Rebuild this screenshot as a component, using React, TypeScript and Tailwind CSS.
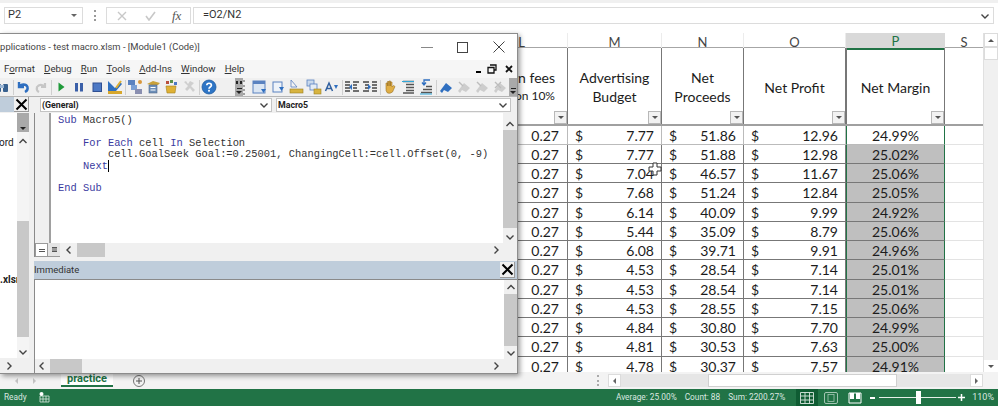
const rows = [
  ["7.77", "51.86", "12.96", "24.99%"],
  ["7.77", "51.88", "12.98", "25.02%"],
  ["7.04", "46.57", "11.67", "25.06%"],
  ["7.68", "51.24", "12.84", "25.05%"],
  ["6.14", "40.09", "9.99", "24.92%"],
  ["5.44", "35.09", "8.79", "25.06%"],
  ["6.08", "39.71", "9.91", "24.96%"],
  ["4.53", "28.54", "7.14", "25.01%"],
  ["4.53", "28.54", "7.14", "25.01%"],
  ["4.53", "28.55", "7.15", "25.06%"],
  ["4.84", "30.80", "7.70", "24.99%"],
  ["4.81", "30.53", "7.63", "25.00%"],
  ["4.78", "30.37", "7.57", "24.91%"],
];

function Chevron({ dir, className = "" }: { dir: "up" | "down" | "left" | "right"; className?: string }) {
  const d = {
    up: "M1.5 6 L5 2.5 L8.5 6",
    down: "M1.5 3.5 L5 7 L8.5 3.5",
    left: "M6.5 1.5 L3 5 L6.5 8.5",
    right: "M3.5 1.5 L7 5 L3.5 8.5",
  }[dir];
  return (
    <svg width="10" height="10" viewBox="0 0 10 10" className={className}>
      <path d={d} fill="none" stroke="#444" strokeWidth="1.4" />
    </svg>
  );
}

function FilterButton() {
  return (
    <div className="absolute bottom-0 right-0 flex h-[13px] w-[13px] items-center justify-center border border-[#b8b8b8] bg-[#f2f2f2]">
      <div className="h-0 w-0 border-x-[3px] border-t-[3px] border-x-transparent border-t-[#555]" />
    </div>
  );
}

function Slot({ children }: { children: React.ReactNode }) {
  return (
    <div className="flex w-[18px] shrink-0 items-center justify-center">
      <svg width="16" height="16" viewBox="0 0 16 16">
        {children}
      </svg>
    </div>
  );
}

function Sep() {
  return (
    <div className="flex w-[2px] shrink-0 justify-center">
      <div className="h-[15px] w-px bg-[#cfcfcf]" />
    </div>
  );
}

function Grip({ marks }: { marks?: boolean }) {
  return (
    <div className="flex h-[18px] w-[8px] shrink-0 flex-col items-center justify-end bg-[#a9a9a9] pb-[2px]">
      {marks && <div className="mb-[4px] h-[3px] w-[6px] border-x-2 border-[#222]" />}
      <div className="mb-[2px] h-px w-[5px] bg-[#222]" />
      <div className="h-0 w-0 border-x-[3px] border-t-[3px] border-x-transparent border-t-[#222]" />
    </div>
  );
}

function Toolbar() {
  return (
    <div className="flex h-[18px] items-center overflow-hidden bg-[#f0f0f0] pl-0">
      <div className="-ml-[6px] flex items-center">
        <Slot>
          <rect x="1" y="5" width="5" height="8" rx="1" fill="#37608f" />
          <rect x="8" y="5" width="5" height="8" rx="1" fill="#37608f" />
          <rect x="5" y="6" width="4" height="3" fill="#9bb6d4" />
        </Slot>
        <Sep />
        <Slot>
          <path d="M4 3 V8 H9 M4.5 8 C6 5 11 4.5 12.5 8 C13 10 12 12 10 13" fill="none" stroke="#2f6fc0" strokeWidth="2.4" />
        </Slot>
        <Slot>
          <path d="M12 4 V8 H8 M11.5 8 C10 5.5 6 5 4 8 C3.5 10 4 12 6 13" fill="none" stroke="#c6c6c6" strokeWidth="2.2" />
        </Slot>
        <Sep />
        <Slot>
          <path d="M5.5 3.5 L11.5 8 L5.5 12.5 Z" fill="#1f9a3a" />
        </Slot>
        <Slot>
          <rect x="4" y="4" width="3" height="8.5" fill="#3a5fa8" />
          <rect x="9" y="4" width="3" height="8.5" fill="#3a5fa8" />
        </Slot>
        <Slot>
          <rect x="4" y="4" width="8.5" height="8.5" fill="#4c78c4" stroke="#2f4f92" />
        </Slot>
        <Slot>
          <path d="M1 13 V2 L8 9 L13 3 L15 5 L9 12 Z" fill="#2f6fc0" />
          <rect x="1" y="12" width="14" height="3" fill="#d7a72c" />
          <path d="M9 9 L14 2" stroke="#e0b030" strokeWidth="2" />
        </Slot>
        <Sep />
        <Slot>
          <rect x="1" y="1" width="7" height="5" fill="#5a82c0" />
          <rect x="4" y="6" width="6" height="5" fill="#7aa0d6" />
          <rect x="8" y="10" width="7" height="5" fill="#8a8fb0" />
          <circle cx="13" cy="3" r="2" fill="#d9973a" />
        </Slot>
        <Slot>
          <path d="M2 5 L8 2 L15 4 L13 6 H6 Z" fill="#c9a13a" />
          <rect x="4" y="6" width="8" height="8" fill="#6d8fb8" stroke="#50698a" strokeWidth="0.6" />
          <rect x="5.5" y="8" width="5" height="1" fill="#fff" />
          <rect x="5.5" y="10.5" width="5" height="1" fill="#fff" />
        </Slot>
        <Slot>
          <path d="M3 7 H13 L12 14 H4 Z" fill="#dfb135" stroke="#a37f1e" strokeWidth="0.6" />
          <rect x="3" y="2" width="3" height="3" fill="#b84f3c" />
          <rect x="7" y="1" width="3" height="3" fill="#5a8f4a" />
          <rect x="11" y="3" width="3" height="3" fill="#4c78c4" />
        </Slot>
        <Slot>
          <path d="M3 3 L7 7 L4 10 L6 12 L9 9 L12 13 L14 11 L10 7 L13 4 L9 2 L7 5 L5 2 Z" fill="#cfcfcf" />
        </Slot>
        <Sep />
        <Slot>
          <circle cx="8" cy="8" r="7" fill="#2e75c6" stroke="#1e5aa0" strokeWidth="0.8" />
          <path d="M5.8 6.3 C5.8 3.6 10.4 3.6 10.4 6.2 C10.4 8 8 7.9 8 9.8" fill="none" stroke="#fff" strokeWidth="1.7" />
          <rect x="7.1" y="10.8" width="1.8" height="1.8" fill="#fff" />
        </Slot>
        <div className="w-[17px] shrink-0" />
        <Grip marks />
        <div className="flex h-[15px] w-[8px] shrink-0 justify-center border-l-2 border-dotted border-[#a0a0a0]" />
        <Slot>
          <rect x="1" y="2" width="12" height="12" fill="#dbe6f3" stroke="#5a82c0" />
          <rect x="1" y="2" width="12" height="3" fill="#5a82c0" />
          <path d="M9 10 H14 L11.5 14 Z" fill="#2f6fc0" />
        </Slot>
        <Slot>
          <rect x="3" y="3" width="9" height="10" fill="#eef3f9" stroke="#5a82c0" />
          <path d="M9 8 H14 L11.5 12 Z" fill="#2f6fc0" />
        </Slot>
        <Slot>
          <path d="M3 1 L9 8 H3 Z" fill="#f3f3f3" stroke="#5a82c0" strokeWidth="0.8" />
          <rect x="2" y="10" width="13" height="4" fill="#d8b440" stroke="#9b7f24" strokeWidth="0.6" />
        </Slot>
        <Slot>
          <rect x="1" y="1" width="7" height="6" fill="#c9d9ec" stroke="#5a82c0" strokeWidth="0.8" />
          <rect x="4" y="5" width="7" height="6" fill="#e4ecf5" stroke="#5a82c0" strokeWidth="0.8" />
          <rect x="8" y="10" width="7" height="5" fill="#d8b440" stroke="#9b7f24" strokeWidth="0.6" />
        </Slot>
        <Slot>
          <path d="M1.5 12 L5 4 L8.5 12 M3 9.5 H7" fill="none" stroke="#2f5f9f" strokeWidth="1.5" />
          <path d="M10 6 H14 L12 10 Z" fill="#2f6fc0" />
        </Slot>
        <Sep />
        <Slot>
          <path d="M1 3 H6 M1 6 H6 M1 9 H6 M1 12 H6 M9 3 H15 M9 6 H13 M9 9 H13 M9 12 H15" stroke="#444" strokeWidth="1.3" />
          <path d="M8 5 L5 8 L8 11 Z" fill="#2f6fc0" />
        </Slot>
        <Slot>
          <path d="M1 3 H7 M3 6 H7 M3 9 H7 M1 12 H7 M10 3 H15 M10 6 H15 M10 9 H15 M10 12 H15" stroke="#444" strokeWidth="1.3" />
          <path d="M6 5 L9 8 L6 11 Z" fill="#2f6fc0" />
        </Slot>
        <Sep />
        <Slot>
          <path d="M4 8 V4 H5.5 V7 V2.5 H7 V7 V2 H8.5 V7 V3 H10 V8 L11.5 6.5 L13 7.5 L10.5 13 Q8 15 5.5 14 Q3.5 12.5 4 8 Z" fill="#e0ae45" stroke="#9b742a" strokeWidth="0.6" />
        </Slot>
        <Slot>
          <path d="M3 2.5 H14 M6 5.5 H14 M6 8.5 H14 M6 11.5 H14 M3 14 H14" stroke="#555" strokeWidth="1.3" />
          <path d="M2 2.5 H14" stroke="#2fa6d8" strokeWidth="1" />
        </Slot>
        <Slot>
          <path d="M3 13.5 H14 M5 10.5 H14 M8 7.5 H14" stroke="#555" strokeWidth="1.3" />
          <path d="M12 1 H6 V5 M4 3.5 L6 6 L8 3.5" fill="none" stroke="#2f6fc0" strokeWidth="1.3" />
          <path d="M2 15 H14" stroke="#2fa6d8" strokeWidth="1" />
        </Slot>
        <Sep />
        <Slot>
          <path d="M2 12 L8 4 L14 9 L10 13 L6 11 L4 14 Z" fill="#2f6fc0" />
        </Slot>
        <Slot>
          <path d="M2 12 L8 4 L14 9 L10 13 L6 11 L4 14 Z" fill="#cdcdcd" />
          <path d="M3 3 L7 7" stroke="#bdbdbd" strokeWidth="1.4" />
        </Slot>
        <Slot>
          <path d="M2 12 L8 4 L14 9 L10 13 L6 11 L4 14 Z" fill="#cdcdcd" />
          <path d="M3 3 L7 7" stroke="#bdbdbd" strokeWidth="1.4" />
        </Slot>
        <Slot>
          <path d="M2 12 L8 4 L14 9 L10 13 L6 11 L4 14 Z" fill="#cdcdcd" />
          <path d="M3 3 L9 9 M9 3 L3 9" stroke="#bdbdbd" strokeWidth="1.4" />
        </Slot>
        <Grip />
      </div>
    </div>
  );
}

function BigClose({ className = "" }: { className?: string }) {
  return (
    <div className={`flex h-[15px] w-[15px] items-center justify-center border-b border-r border-[#9a9a9a] bg-[#f0f0f0] ${className}`}>
      <svg width="13" height="13" viewBox="0 0 13 13">
        <path d="M1.5 1.5 L11.5 11.5 M11.5 1.5 L1.5 11.5" stroke="#000" strokeWidth="2" />
      </svg>
    </div>
  );
}

function VbaWindow() {
  return (
    <div className="absolute left-0 top-[33px] z-10 flex h-[341px] w-[518px] flex-col overflow-hidden border-r border-t border-b border-[#8c8c8c] bg-[#f0f0f0] font-['Roboto',sans-serif] shadow-[2px_2px_5px_rgba(0,0,0,0.4)]">
      <div className="flex h-[26px] items-center justify-between bg-white">
        <span className="-ml-[6px] whitespace-nowrap text-[9.4px] leading-none text-[#444]">
          Applications - test macro.xlsm - [Module1 (Code)]
        </span>
        <div className="flex items-center">
          <div className="h-px w-[12px] bg-[#888]" />
          <div className="ml-[24px] h-[11px] w-[11px] border border-[#444]" />
          <svg width="12" height="12" viewBox="0 0 12 12" className="ml-[25px] mr-[12px]">
            <path d="M0.5 0.5 L11.5 11.5 M11.5 0.5 L0.5 11.5" stroke="#444" strokeWidth="1" />
          </svg>
        </div>
      </div>
      <div className="flex h-[18px] items-center justify-between bg-[#f6f6f6] text-[9.7px] leading-none text-[#333]">
        <div className="flex items-center pl-[4px]">
          <span>F<u>o</u>rmat</span>
          <span className="ml-[9px]"><u>D</u>ebug</span>
          <span className="ml-[9px]"><u>R</u>un</span>
          <span className="ml-[9px]"><u>T</u>ools</span>
          <span className="ml-[9px]"><u>A</u>dd-Ins</span>
          <span className="ml-[9px]"><u>W</u>indow</span>
          <span className="ml-[9px]"><u>H</u>elp</span>
        </div>
        <div className="flex items-center pr-[4px]">
          <div className="mt-[6px] h-[2px] w-[5px] bg-black" />
          <svg width="10" height="10" viewBox="0 0 10 10" className="ml-[6px]">
            <path d="M3 1 H9 V6 H7 M1 3.5 H7 V9 H1 Z" fill="none" stroke="#111" strokeWidth="1.3" />
          </svg>
          <svg width="8" height="8" viewBox="0 0 8 8" className="ml-[8px]">
            <path d="M1 1 L7 7 M7 1 L1 7" stroke="#111" strokeWidth="1.8" />
          </svg>
        </div>
      </div>
      <Toolbar />

      <div className="flex min-h-0 flex-1 border-t border-[#b5b5b5]">
        {/* project explorer, mostly cut off on the left */}
        <div className="flex w-[34px] shrink-0 flex-col">
          <div className="flex h-[16px] bg-[#f0f0f0]">
            <div className="h-[15px] w-[14px] bg-[#bfcddb]" />
            <BigClose />
          </div>
          <div className="flex min-h-0 flex-1 pr-[5px]">
            <div className="relative min-w-0 flex-1 overflow-hidden bg-white text-[10px] text-[#222]">
              <span className="absolute left-[-1px] top-[22px]">ord</span>
              <span className="absolute left-0 top-[159px] font-bold">.xlsı</span>
            </div>
            <div className="flex w-[12px] shrink-0 flex-col items-center bg-[#f4f4f4]">
              <div className="mb-[5px] flex h-[19px] w-full flex-col items-center justify-end bg-[#a9a9a9] pb-[2px]">
                <div className="h-0 w-0 border-x-[3px] border-t-[3px] border-x-transparent border-t-[#222]" />
              </div>
              <Chevron dir="up" />
              <div className="h-[74px]" />
              <div className="h-[116px] w-full bg-[#c8c8c8]" />
              <div className="flex-1" />
              <Chevron dir="down" className="mb-[1px]" />
            </div>
          </div>
          <div className="flex h-[15px] items-center bg-[#f0f0f0] pl-[4px]">
            <Chevron dir="right" />
          </div>
        </div>

        <div className="flex min-w-0 flex-1 flex-col">
          <div className="flex h-[16px] gap-[4px] pl-[6px] pr-[6px] pt-[1px]">
            <div className="flex h-[14px] w-[232px] items-center justify-between border border-[#c4c4c4] bg-white pl-[1px] pr-[2px]">
              <span className="text-[8.8px] font-bold leading-none text-[#222]">(General)</span>
              <Chevron dir="down" />
            </div>
            <div className="flex h-[14px] flex-1 items-center justify-between border border-[#c4c4c4] bg-white pl-[1px] pr-[2px]">
              <span className="text-[8.8px] font-bold leading-none text-[#222]">Macro5</span>
              <Chevron dir="down" />
            </div>
          </div>

          <div className="flex h-[130px] border-l border-[#8a8a8a]">
            <div className="w-[16px] shrink-0 border-r-2 border-[#a0a0a0] bg-[#f0f0f0]" />
            <pre className="min-w-0 flex-1 overflow-hidden bg-white pl-[7px] pt-[2px] font-['Liberation_Mono',monospace] text-[10.4px] leading-[11.4px] text-[#333]">
              <span className="text-[#3a3aa0]">Sub</span> Macro5(){"\n\n"}
              {"    "}<span className="text-[#3a3aa0]">For Each</span> cell <span className="text-[#3a3aa0]">In</span> Selection{"\n"}
              {"        "}cell.GoalSeek Goal:=0.25001, ChangingCell:=cell.Offset(0, -9){"\n"}
              {"    "}<span className="text-[#3a3aa0]">Next</span><span className="border-l border-black" />{"\n\n"}
              <span className="text-[#3a3aa0]">End Sub</span>
            </pre>
            <div className="flex w-[14px] shrink-0 flex-col items-center bg-[#f0f0f0] pt-[7px]">
              <Chevron dir="up" />
              <div className="h-[98px] w-full bg-[#c8c8c8]" />
              <div className="flex-1" />
              <Chevron dir="down" className="mb-[1px]" />
            </div>
          </div>

          <div className="flex h-[14px] items-center border-l border-[#8a8a8a] bg-[#f0f0f0]">
            <div className="flex h-full w-[13px] items-center justify-center border border-[#9a9a9a] bg-white">
              <div className="h-[3px] w-[6px] border-y border-[#555]" />
            </div>
            <div className="flex h-full w-[12px] items-center justify-center border-b border-[#9a9a9a] bg-[#e4e4e4]">
              <div className="h-[5px] w-[5px] border-y border-[#555] bg-[#999]" />
            </div>
            <Chevron dir="left" className="ml-[4px]" />
            <div className="ml-[3px] h-full w-[28px] bg-[#c8c8c8]" />
            <div className="flex-1" />
            <Chevron dir="right" className="mr-[16px]" />
          </div>
          <div className="h-[4px]" />

          <div className="flex h-[18px] items-center justify-between bg-[#bfcddb] text-[9.5px] leading-none text-[#333]">
            <span>Immediate</span>
            <BigClose className="mr-[2px] h-[16px]" />
          </div>
          <div className="flex h-[80px] border-l border-t border-[#8a8a8a]">
            <div className="flex-1 bg-white" />
            <div className="flex w-[13px] shrink-0 flex-col items-center bg-[#f0f0f0] pt-[3px]">
              <Chevron dir="up" />
              <div className="mt-[1px] h-[52px] w-full bg-[#c8c8c8]" />
              <div className="flex-1" />
              <Chevron dir="down" className="mb-[1px]" />
            </div>
          </div>
          <div className="flex h-[14px] items-center border-l border-[#8a8a8a] bg-[#f0f0f0] pl-[2px]">
            <Chevron dir="left" />
            <div className="ml-[3px] h-full w-[32px] bg-[#c8c8c8]" />
            <div className="flex-1" />
            <Chevron dir="right" className="mr-[16px]" />
          </div>
        </div>
      </div>
    </div>
  );
}

function FormulaBar() {
  return (
    <div className="flex h-[33px] items-start gap-0 border-t-[3px] border-[#f0f0f0] bg-white pt-[4px] font-['Roboto',sans-serif] text-[11px] text-[#333]">
      <div className="ml-[4px] flex h-[17px] w-[79px] items-center justify-between border border-[#dcdcdc] px-[3px]">
        <span>P2</span>
        <div className="mr-[2px] h-0 w-0 border-x-[3px] border-t-[3px] border-x-transparent border-t-[#666]" />
      </div>
      <div className="ml-[11px] h-[11px] w-[2px] translate-y-[3px] border-l-2 border-dotted border-[#999]" />
      <div className="ml-[10px] flex h-[17px] w-[85px] items-center border border-[#dcdcdc]">
        <svg width="10" height="10" viewBox="0 0 10 10" className="ml-[10px]">
          <path d="M1 1 L9 9 M9 1 L1 9" stroke="#c8c8c8" strokeWidth="1.4" />
        </svg>
        <svg width="11" height="10" viewBox="0 0 11 10" className="ml-[18px]">
          <path d="M1 5 L4 9 L10 1" fill="none" stroke="#c8c8c8" strokeWidth="1.6" />
        </svg>
        <span className="ml-[16px] font-['Liberation_Serif',serif] text-[13px] italic leading-none text-[#555]">fx</span>
      </div>
      <div className="ml-[2px] flex h-[17px] flex-1 items-center justify-between border border-[#dcdcdc] pl-[9px] pr-[3px]">
        <span>=O2/N2</span>
        <Chevron dir="down" />
      </div>
      <div className="w-[4px]" />
    </div>
  );
}

function Sheet() {
  const cols = "grid grid-cols-[568px_94px_82px_102px_99px_38px]";
  const headCell = "flex items-center justify-center text-center border-r border-[#ececec] text-[#444] pt-[2px]";
  const cell = "border-r border-[#777]";
  return (
    <div className="flex h-[339px] font-['Lato',sans-serif] text-[14px] text-[#1c1c1c]">
      <div className="w-[983px] shrink-0 overflow-hidden bg-white">
        <div className={`${cols} h-[15px] border-b border-[#a6a6a6] text-[13px] leading-none`}>
          <div className="flex items-center justify-end border-r border-[#ececec] pr-[42px] pt-[2px] text-[#444]">L</div>
          <div className={headCell}>M</div>
          <div className={headCell}>N</div>
          <div className={headCell}>O</div>
          <div className="-mb-px flex items-center justify-center border-b-2 border-[#217346] bg-[#d9d9d9] pt-[2px] text-[#217346]">P</div>
          <div className="flex items-center justify-center pt-[2px] text-[#444]">S</div>
        </div>
        <div className={`${cols} h-[78px] border-b-2 border-[#a0a0a0] leading-[19px]`}>
          <div className={`relative ${cell}`}>
            <div className="absolute right-[12px] top-[21px] text-right leading-[18px]">
              <div className="whitespace-nowrap">rn fees</div>
              <div className="whitespace-nowrap text-[12px]">on 10%</div>
            </div>
            <FilterButton />
          </div>
          <div className={`relative flex items-center justify-center pt-[2px] text-center ${cell}`}>
            <span>Advertising<br />Budget</span>
            <FilterButton />
          </div>
          <div className={`relative flex items-center justify-center pt-[2px] text-center ${cell}`}>
            <span>Net<br />Proceeds</span>
            <FilterButton />
          </div>
          <div className={`relative flex items-center justify-center pt-[2px] text-center ${cell}`}>
            <span>Net Profit</span>
            <FilterButton />
          </div>
          <div className="relative flex items-center justify-center border-x border-x-[#777] pt-[2px] text-center">
            <span>Net Margin</span>
            <FilterButton />
          </div>
          <div />
        </div>
        {rows.map((r, i) => (
          <div key={i} className={`${cols} grid-rows-[minmax(0,1fr)] ${i % 4 === 3 ? "h-[20px]" : "h-[19px]"} leading-[20px]`}>
            <div className={`border-b pr-[8px] text-right ${i === 0 ? "border-[#bbb]" : "border-[#777]"} ${cell}`}>0.27</div>
            <div className={`flex justify-between border-b px-[7px] ${i === 0 ? "border-[#bbb]" : "border-[#777]"} ${cell}`}>
              <span>$</span>
              <span>{r[0]}</span>
            </div>
            <div className={`flex justify-between border-b px-[7px] ${i === 0 ? "border-[#bbb]" : "border-[#777]"} ${cell}`}>
              <span>$</span>
              <span>{r[1]}</span>
            </div>
            <div className={`flex justify-between border-b px-[7px] ${i === 0 ? "border-[#bbb]" : "border-[#777]"} ${cell}`}>
              <span>$</span>
              <span>{r[2]}</span>
            </div>
            <div className={`border-x border-b border-x-[#217346] text-center ${i === 0 ? "border-b-[#bbb] bg-white" : "border-b-[#777] bg-[#bfbfbf]"}`}>
              {r[3]}
            </div>
            <div className="border-b border-[#e3e3e3]" />
          </div>
        ))}
      </div>
      <div className="flex w-[15px] shrink-0 flex-col border-l border-[#e0e0e0] bg-[#f0f0f0]">
        <div className="flex h-[14px] items-center justify-center border border-[#dcdcdc] bg-white">
          <div className="h-0 w-0 border-x-[3px] border-b-[3px] border-x-transparent border-b-[#555]" />
        </div>
        <div className="h-[13px] border border-[#dcdcdc] bg-white" />
        <div className="flex-1" />
        <div className="flex h-[12px] items-center justify-center bg-white">
          <div className="h-0 w-0 border-x-[3px] border-t-[3px] border-x-transparent border-t-[#555]" />
        </div>
      </div>
    </div>
  );
}

function TabBar() {
  return (
    <div className="flex h-[17px] items-center bg-[#f3f3f3] font-['Roboto',sans-serif]">
      <div className="ml-[15px] h-0 w-0 border-y-[3px] border-r-[3px] border-y-transparent border-r-[#c4c4c4]" />
      <div className="ml-[15px] h-0 w-0 border-y-[3px] border-l-[3px] border-y-transparent border-l-[#c4c4c4]" />
      <div className="ml-[25px] flex h-[15px] w-[52px] items-center justify-center self-start border-b-2 border-[#217346] bg-white text-[11px] font-bold leading-none text-[#217346]">
        practice
      </div>
      <div className="ml-[20px] flex h-[12px] w-[12px] items-center justify-center rounded-full border border-[#777] text-[#555]">
        <svg width="8" height="8" viewBox="0 0 8 8">
          <path d="M4 1 V7 M1 4 H7" stroke="#555" strokeWidth="1" />
        </svg>
      </div>
      <div className="ml-[452px] h-[11px] w-[2px] border-l-2 border-dotted border-[#aaa]" />
      <div className="ml-[9px] flex h-[13px] w-[13px] items-center justify-center border border-[#dcdcdc] bg-white">
        <div className="h-0 w-0 border-y-[3px] border-r-[3px] border-y-transparent border-r-[#666]" />
      </div>
      <div className="h-[13px] w-[349px] bg-[#e6e6e6] pl-[87px]">
        <div className="h-full w-[189px] border border-[#d0d0d0] bg-white" />
      </div>
      <div className="flex h-[13px] w-[13px] items-center justify-center border border-[#dcdcdc] bg-white">
        <div className="h-0 w-0 border-y-[3px] border-l-[3px] border-y-transparent border-l-[#666]" />
      </div>
    </div>
  );
}

function StatusBar() {
  return (
    <div className="flex h-[17px] items-center bg-[#217346] font-['Roboto',sans-serif] text-[8.3px] leading-none text-[#dbe8e0]">
      <span className="ml-[4px]">Ready</span>
      <svg width="11" height="11" viewBox="0 0 11 11" className="ml-[12px]">
        <path d="M1 4 H10 V10 H1 Z M1 7 H10 M4 4 V10 M7 4 V10" fill="none" stroke="#dbe8e0" strokeWidth="0.8" />
        <circle cx="2.5" cy="2" r="2" fill="#fff" />
      </svg>
      <span className="ml-auto">Average: 25.00%</span>
      <span className="ml-[8px]">Count: 88</span>
      <span className="ml-[8px]">Sum: 2200.27%</span>
      <div className="ml-[11px] flex h-full w-[22px] items-center justify-center bg-[#0f5c33]">
        <svg width="14" height="12" viewBox="0 0 14 12">
          <path d="M0.5 0.5 H13.5 V11.5 H0.5 Z M0.5 4 H13.5 M0.5 8 H13.5 M5 0.5 V11.5 M9.5 0.5 V11.5" fill="none" stroke="#dbe8e0" strokeWidth="0.9" />
        </svg>
      </div>
      <svg width="14" height="12" viewBox="0 0 14 12" className="ml-[6px] mr-[10px] opacity-70">
        <rect x="0.5" y="0.5" width="13" height="11" rx="1.5" fill="none" stroke="#dbe8e0" />
        <rect x="4" y="2.5" width="6" height="7" fill="none" stroke="#dbe8e0" strokeWidth="0.8" />
      </svg>
      <svg width="14" height="12" viewBox="0 0 14 12">
        <path d="M1 1 H13 V11 H1 Z" fill="none" stroke="#fff" />
        <rect x="2" y="1" width="4" height="6" fill="#fff" />
        <rect x="8" y="1" width="4" height="6" fill="#fff" />
      </svg>
      <div className="ml-[8px] h-[2px] w-[5px] bg-white" />
      <div className="relative ml-[4px] h-px w-[77px] bg-[#e6efe9]">
        <div className="absolute left-[37px] top-[-6px] h-[13px] w-[5px] bg-white" />
      </div>
      <svg width="7" height="7" viewBox="0 0 7 7" className="ml-[2px]">
        <path d="M3.5 0 V7 M0 3.5 H7" stroke="#fff" strokeWidth="1.5" />
      </svg>
      <span className="ml-[7px] mr-[4px] text-[9px]">110%</span>
    </div>
  );
}

export default function App() {
  return (
    <div className="relative h-[406px] w-[998px] overflow-hidden bg-white">
      <FormulaBar />
      <Sheet />
      <TabBar />
      <StatusBar />
      <VbaWindow />
      <svg width="14" height="14" viewBox="0 0 14 14" className="absolute left-[648px] top-[162px] z-20">
        <path d="M5 1 H9 V5 H13 V9 H9 V13 H5 V9 H1 V5 H5 Z" fill="#fff" stroke="#333" strokeWidth="1" />
      </svg>
    </div>
  );
}
